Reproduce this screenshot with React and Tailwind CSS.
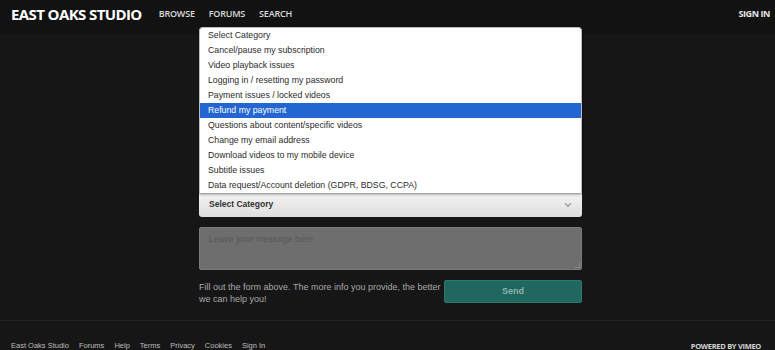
import { ChevronDown } from "lucide-react";

const categories = [
  "Select Category",
  "Cancel/pause my subscription",
  "Video playback issues",
  "Logging in / resetting my password",
  "Payment issues / locked videos",
  "Refund my payment",
  "Questions about content/specific videos",
  "Change my email address",
  "Download videos to my mobile device",
  "Subtitle issues",
  "Data request/Account deletion (GDPR, BDSG, CCPA)",
];

const footerLinks = ["East Oaks Studio", "Forums", "Help", "Terms", "Privacy", "Cookies", "Sign In"];

const App = () => {
  return (
    <div className="relative min-h-[350px] bg-[#161616] font-['Liberation_Sans',Arial,sans-serif]">
      {/* Header */}
      <header className="flex h-[34px] items-center bg-[#121212] pb-[6px] pl-[11px] pr-[5px]">
        <div className="font-['Open_Sans',sans-serif] text-[15px] font-bold tracking-[-0.6px] text-white">
          EAST OAKS STUDIO
        </div>
        <nav className="ml-[17px] flex gap-[14px] font-['Open_Sans',sans-serif] text-[9px] font-semibold tracking-[-0.2px] text-[#dcdcdc]">
          <span>BROWSE</span>
          <span>FORUMS</span>
          <span>SEARCH</span>
        </nav>
        <div className="ml-auto font-['Open_Sans',sans-serif] text-[9px] font-bold tracking-[-0.4px] text-[#e6e6e6]">
          SIGN IN
        </div>
      </header>

      {/* Form */}
      <main className="ml-[199px] w-[383px] pt-[158px]">
        <div className="flex h-[25px] items-center justify-between rounded-b-[3px] bg-gradient-to-b from-[#f4f4f4] to-[#dedede] pl-[10px] pr-[9px]">
          <span className="text-[8.5px] font-bold text-[#333]">Select Category</span>
          <ChevronDown className="h-[10px] w-[10px] text-[#999]" strokeWidth={3} />
        </div>
        <div className="relative mt-[10px] h-[43px] rounded-[2px] border border-[#7a7a7a] bg-[#6e6e6e] px-[9px] pt-[6px] text-[9px] leading-[11px] text-[#585858]">
          Leave your message here
          <div className="absolute bottom-[1px] right-[1px] h-[5px] w-[5px] border-b border-r border-[#888]" />
        </div>
        <div className="mt-[10px] flex items-start justify-between">
          <p className="mt-[1px] w-[245px] text-[9px] leading-[12px] text-[#a8a8a8]">
            Fill out the form above. The more info you provide, the better we can help you!
          </p>
          <button className="flex h-[23px] w-[138px] items-center justify-center rounded-[2px] border border-[#2b7a70] bg-[#1f675f] text-[9px] font-bold leading-none text-[#8fb3ae]">
            Send
          </button>
        </div>
      </main>

      {/* Footer */}
      <footer className="mt-[15px] border-t border-[#232323] px-[11px] pt-[20px]">
        <div className="flex items-center justify-between">
          <div className="flex gap-[10px] text-[7.5px] leading-[10px] text-[#bdbdbd]">
            {footerLinks.map((link) => (
              <span key={link}>{link}</span>
            ))}
          </div>
          <div className="mr-[3px] font-['Open_Sans',sans-serif] text-[7.5px] font-bold leading-[10px] tracking-[-0.3px] text-[#d4d4d4]">
            POWERED BY VIMEO
          </div>
        </div>
      </footer>

      {/* Open select dropdown */}
      <ul className="absolute left-[199px] top-[27px] w-[383px] overflow-hidden rounded-t-[4px] border-x border-t border-[#bdbdbd] bg-white text-[8.75px] text-[#2b2b2b] shadow-[0_1px_3px_rgba(0,0,0,0.5)]">
        {categories.map((item) => (
          <li
            key={item}
            className={`h-[15px] pl-[8px] leading-[15px] ${
              item === "Refund my payment" ? "bg-[#2466d1] text-white" : ""
            }`}
          >
            {item}
          </li>
        ))}
      </ul>
    </div>
  );
};

export default App;
